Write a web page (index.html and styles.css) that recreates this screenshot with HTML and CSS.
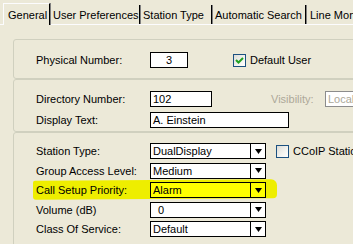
FILE: index.html
```html
<!DOCTYPE html>
<html>
<head>
<meta charset="utf-8">
<link rel="stylesheet" href="styles.css">
</head>
<body>
<div class="window">
  <div class="tabs">
    <div class="tab tab-general active">General</div>
    <div class="tab tab-user">User Preferences</div>
    <div class="tab tab-station">Station Type</div>
    <div class="tab tab-auto">Automatic Search</div>
    <div class="tab tab-line">Line Monitoring</div>
  </div>
  <div class="panel">
    <div class="group group-1">
      <div class="row">
        <span class="label">Physical Number:</span>
        <span class="field field-phys">3</span>
        <span class="check checked"><svg width="11" height="11" viewBox="0 0 11 11"><path d="M2 5 L4.5 7.5 L9 3" fill="none" stroke="#21A121" stroke-width="2"/></svg></span>
        <span class="check-label">Default User</span>
      </div>
    </div>
    <div class="group group-2">
      <div class="row">
        <span class="label">Directory Number:</span>
        <span class="field field-dir">102</span>
        <span class="label-disabled">Visibility:</span>
        <span class="field field-disabled">Local</span>
      </div>
      <div class="row">
        <span class="label">Display Text:</span>
        <span class="field field-display">A. Einstein</span>
      </div>
    </div>
    <div class="group group-3">
      <div class="row">
        <span class="label">Station Type:</span>
        <span class="select"><span class="select-text">DualDisplay</span><span class="select-btn"><svg width="7" height="5" viewBox="0 0 7 5"><path d="M0 0 H7 L3.5 5 Z" fill="#000"/></svg></span></span>
        <span class="check"></span>
        <span class="check-label">CCoIP Station</span>
      </div>
      <div class="row">
        <span class="label">Group Access Level:</span>
        <span class="select"><span class="select-text">Medium</span><span class="select-btn"><svg width="7" height="5" viewBox="0 0 7 5"><path d="M0 0 H7 L3.5 5 Z" fill="#000"/></svg></span></span>
      </div>
      <div class="row row-highlight">
        <span class="marker"></span>
        <span class="label">Call Setup Priority:</span>
        <span class="select select-yellow"><span class="select-text">Alarm</span><span class="select-btn"><svg width="7" height="5" viewBox="0 0 7 5"><path d="M0 0 H7 L3.5 5 Z" fill="#000"/></svg></span></span>
      </div>
      <div class="row">
        <span class="label">Volume (dB)</span>
        <span class="select"><span class="select-text select-indent">0</span><span class="select-btn"><svg width="7" height="5" viewBox="0 0 7 5"><path d="M0 0 H7 L3.5 5 Z" fill="#000"/></svg></span></span>
      </div>
      <div class="row">
        <span class="label">Class Of Service:</span>
        <span class="select"><span class="select-text">Default</span><span class="select-btn"><svg width="7" height="5" viewBox="0 0 7 5"><path d="M0 0 H7 L3.5 5 Z" fill="#000"/></svg></span></span>
      </div>
    </div>
  </div>
</div>
</body>
</html>
```

FILE: styles.css
```css
html, body {
  margin: 0;
  padding: 0;
  background: #ECE9D8;
  overflow: hidden;
}
body {
  font-family: "Liberation Sans", Arial, sans-serif;
  font-size: 11px;
  color: #000;
  width: 353px;
  height: 244px;
}
.window {
  width: 353px;
  height: 244px;
  overflow: hidden;
}
.tabs {
  display: flex;
  padding-top: 3px;
  padding-left: 3px;
  height: 21px;
  border-bottom: 1px solid #FCFCFE;
  white-space: nowrap;
}
.tab {
  height: 19px;
  margin-top: 2px;
  display: flex;
  align-items: center;
  padding-left: 2px;
  border-right: 1px solid #000;
  box-shadow: 1px 0 0 #808080;
  box-sizing: border-box;
  flex: none;
}
.tab.active {
  height: 22px;
  margin-top: 0;
  margin-bottom: -1px;
  padding-left: 4px;
  background: #ECE9D8;
  border-top: 1px solid #FCFCFE;
  border-left: 1px solid #FCFCFE;
  padding-top: 1px;
}
.tab-general { width: 47px; }
.tab-user { width: 89px; margin-left: 1px; }
.tab-station { width: 72px; padding-left: 3px; }
.tab-auto { width: 94px; padding-left: 3px; }
.tab-line { width: 80px; padding-left: 4px; border-right: none; box-shadow: none; }

.panel {
  padding-top: 14px;
  padding-left: 13px;
}
.group {
  border: 1px solid #D0D0BF;
  border-radius: 3px;
  width: 380px;
  box-sizing: border-box;
  padding-left: 22px;
  display: flex;
  flex-direction: column;
}
.group-1 {
  height: 40px;
  padding-top: 12px;
}
.group-2 {
  height: 53px;
  padding-top: 11px;
  gap: 5px;
}
.group-3 {
  height: 140px;
  padding-top: 10px;
  gap: 3.5px;
}
.row {
  display: flex;
  align-items: center;
  height: 16px;
  position: relative;
  white-space: nowrap;
}
.label {
  width: 114px;
  flex: none;
  position: relative;
}
.field {
  height: 16px;
  box-sizing: border-box;
  border: 1px solid #000;
  background: #fff;
  display: flex;
  align-items: center;
  padding-left: 2px;
  flex: none;
}
.field-phys {
  width: 38px;
  justify-content: center;
  padding-left: 0;
}
.field-dir { width: 62px; }
.field-display { width: 139px; }
.label-disabled {
  color: #ACA899;
  margin-left: 59px;
  width: 54px;
}
.field-disabled {
  color: #ACA899;
  border-color: #8C8C8C;
  background: #fff;
  width: 60px;
  margin-left: 0;
}
.check {
  width: 13px;
  height: 13px;
  box-sizing: border-box;
  border: 1px solid #1C5180;
  background: linear-gradient(135deg, #DCDCD7 0%, #F4F4F0 60%, #FFFFFF 100%);
  display: flex;
  align-items: center;
  justify-content: center;
  flex: none;
}
.group-1 .check { margin-left: 45px; }
.group-3 .check { margin-left: 10px; }
.check-label {
  margin-left: 4px;
}
.select {
  width: 116px;
  height: 16px;
  box-sizing: border-box;
  border: 1px solid #000;
  background: #fff;
  display: flex;
  flex: none;
  position: relative;
}
.select-text {
  flex: 1;
  padding-left: 2px;
  display: flex;
  align-items: center;
}
.select-indent { padding-left: 7px; }
.select-btn {
  width: 15px;
  border-left: 1px solid #000;
  display: flex;
  align-items: center;
  justify-content: center;
  box-sizing: border-box;
}
.select-yellow { background: #FFFF00; }
.marker {
  position: absolute;
  left: -3px;
  top: -2px;
  width: 244px;
  height: 19px;
  background: #EEEE00;
  border-radius: 2px 6px 4px 3px;
  transform: skewY(-0.4deg);
}
```
